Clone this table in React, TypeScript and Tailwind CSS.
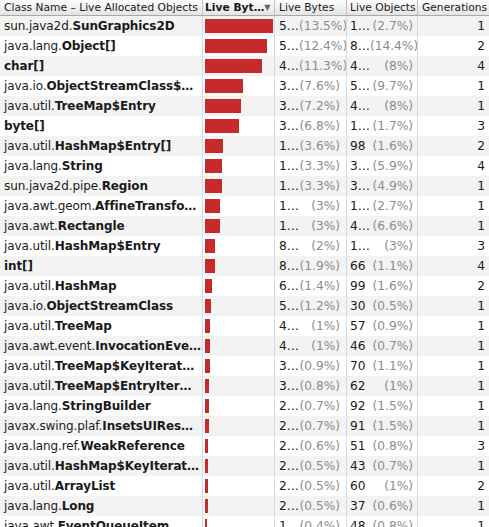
type Row = {
  pkg: string;
  cls: string;
  pct: number;
  bytes: string;
  bytesPct: string;
  objs: string;
  objsPct: string;
  gen: number;
};

const rows: Row[] = [
  { pkg: "sun.java2d.", cls: "SunGraphics2D", pct: 13.5, bytes: "5…", bytesPct: "(13.5%)", objs: "1…", objsPct: "(2.7%)", gen: 1 },
  { pkg: "java.lang.", cls: "Object[]", pct: 12.4, bytes: "5…", bytesPct: "(12.4%)", objs: "8…", objsPct: "(14.4%)", gen: 2 },
  { pkg: "", cls: "char[]", pct: 11.3, bytes: "4…", bytesPct: "(11.3%)", objs: "4…", objsPct: "(8%)", gen: 4 },
  { pkg: "java.io.", cls: "ObjectStreamClass$…", pct: 7.6, bytes: "3…", bytesPct: "(7.6%)", objs: "5…", objsPct: "(9.7%)", gen: 1 },
  { pkg: "java.util.", cls: "TreeMap$Entry", pct: 7.2, bytes: "3…", bytesPct: "(7.2%)", objs: "4…", objsPct: "(8%)", gen: 1 },
  { pkg: "", cls: "byte[]", pct: 6.8, bytes: "3…", bytesPct: "(6.8%)", objs: "1…", objsPct: "(1.7%)", gen: 3 },
  { pkg: "java.util.", cls: "HashMap$Entry[]", pct: 3.6, bytes: "1…", bytesPct: "(3.6%)", objs: "98", objsPct: "(1.6%)", gen: 2 },
  { pkg: "java.lang.", cls: "String", pct: 3.3, bytes: "1…", bytesPct: "(3.3%)", objs: "3…", objsPct: "(5.9%)", gen: 4 },
  { pkg: "sun.java2d.pipe.", cls: "Region", pct: 3.3, bytes: "1…", bytesPct: "(3.3%)", objs: "3…", objsPct: "(4.9%)", gen: 1 },
  { pkg: "java.awt.geom.", cls: "AffineTransfo…", pct: 3, bytes: "1…", bytesPct: "(3%)", objs: "1…", objsPct: "(2.7%)", gen: 1 },
  { pkg: "java.awt.", cls: "Rectangle", pct: 3, bytes: "1…", bytesPct: "(3%)", objs: "4…", objsPct: "(6.6%)", gen: 1 },
  { pkg: "java.util.", cls: "HashMap$Entry", pct: 2, bytes: "8…", bytesPct: "(2%)", objs: "1…", objsPct: "(3%)", gen: 3 },
  { pkg: "", cls: "int[]", pct: 1.9, bytes: "8…", bytesPct: "(1.9%)", objs: "66", objsPct: "(1.1%)", gen: 4 },
  { pkg: "java.util.", cls: "HashMap", pct: 1.4, bytes: "6…", bytesPct: "(1.4%)", objs: "99", objsPct: "(1.6%)", gen: 2 },
  { pkg: "java.io.", cls: "ObjectStreamClass", pct: 1.2, bytes: "5…", bytesPct: "(1.2%)", objs: "30", objsPct: "(0.5%)", gen: 1 },
  { pkg: "java.util.", cls: "TreeMap", pct: 1, bytes: "4…", bytesPct: "(1%)", objs: "57", objsPct: "(0.9%)", gen: 1 },
  { pkg: "java.awt.event.", cls: "InvocationEve…", pct: 1, bytes: "4…", bytesPct: "(1%)", objs: "46", objsPct: "(0.7%)", gen: 1 },
  { pkg: "java.util.", cls: "TreeMap$KeyIterat…", pct: 0.9, bytes: "3…", bytesPct: "(0.9%)", objs: "70", objsPct: "(1.1%)", gen: 1 },
  { pkg: "java.util.", cls: "TreeMap$EntryIter…", pct: 0.8, bytes: "3…", bytesPct: "(0.8%)", objs: "62", objsPct: "(1%)", gen: 1 },
  { pkg: "java.lang.", cls: "StringBuilder", pct: 0.7, bytes: "2…", bytesPct: "(0.7%)", objs: "92", objsPct: "(1.5%)", gen: 1 },
  { pkg: "javax.swing.plaf.", cls: "InsetsUIRes…", pct: 0.7, bytes: "2…", bytesPct: "(0.7%)", objs: "91", objsPct: "(1.5%)", gen: 1 },
  { pkg: "java.lang.ref.", cls: "WeakReference", pct: 0.6, bytes: "2…", bytesPct: "(0.6%)", objs: "51", objsPct: "(0.8%)", gen: 3 },
  { pkg: "java.util.", cls: "HashMap$KeyIterat…", pct: 0.5, bytes: "2…", bytesPct: "(0.5%)", objs: "43", objsPct: "(0.7%)", gen: 1 },
  { pkg: "java.util.", cls: "ArrayList", pct: 0.5, bytes: "2…", bytesPct: "(0.5%)", objs: "60", objsPct: "(1%)", gen: 2 },
  { pkg: "java.lang.", cls: "Long", pct: 0.5, bytes: "2…", bytesPct: "(0.5%)", objs: "37", objsPct: "(0.6%)", gen: 1 },
  { pkg: "java.awt.", cls: "EventQueueItem", pct: 0.4, bytes: "1…", bytesPct: "(0.4%)", objs: "48", objsPct: "(0.8%)", gen: 1 },
];

const cols = "grid grid-cols-[203px_72px_72px_71px_71px]";

export default function App() {
  return (
    <div className="h-[527px] w-[489px] overflow-hidden bg-white font-['DejaVu_Sans',sans-serif] text-[12.2px] text-[#1a1a1a]">
      {/* Header */}
      <div className={`${cols} h-4 border-b border-[#a9a9a9] bg-gradient-to-b from-[#fdfdfd] to-[#e4e4e4] text-[10.7px] leading-[15px]`}>
        <div className="overflow-hidden whitespace-nowrap border-r border-[#c0c0c0] pl-1">Class Name – Live Allocated Objects</div>
        <div className="flex items-center justify-between overflow-hidden whitespace-nowrap border-r border-[#c0c0c0] pl-0.5 pr-1 font-bold">
          <span>Live Byt…</span>
          <span className="text-[8px] text-[#666]">▼</span>
        </div>
        <div className="overflow-hidden whitespace-nowrap border-r border-[#c0c0c0] pl-1">Live Bytes</div>
        <div className="overflow-hidden whitespace-nowrap border-r border-[#c0c0c0] pl-[3px]">Live Objects</div>
        <div className="overflow-hidden whitespace-nowrap pl-1">Generations</div>
      </div>

      {/* Rows */}
      {rows.map((r, i) => (
        <div key={i} className={`${cols} h-5 leading-5 ${i % 2 === 0 ? "bg-[#f3f3f3]" : "bg-white"}`}>
          <div className="overflow-hidden whitespace-nowrap border-r border-[#d3daee] pl-1 text-[12px] tracking-[-0.1px]">
            {r.pkg}
            <span className="font-bold">{r.cls}</span>
          </div>
          <div className="border-r border-[#d3daee] pl-0.5 pt-[3px]">
            <div className="h-[14px] bg-[#c62a2a]" style={{ width: r.pct * 5 }} />
          </div>
          <div className="flex justify-between overflow-hidden whitespace-nowrap border-r border-[#d3daee] pl-1 pr-1.5">
            <span>{r.bytes}</span>
            <span className="text-[#8c8c8c]">{r.bytesPct}</span>
          </div>
          <div className="flex justify-between overflow-hidden whitespace-nowrap border-r border-[#d3daee] pl-[3px] pr-1">
            <span>{r.objs}</span>
            <span className="text-[#8c8c8c]">{r.objsPct}</span>
          </div>
          <div className="pr-1 text-right">{r.gen}</div>
        </div>
      ))}
    </div>
  );
}
